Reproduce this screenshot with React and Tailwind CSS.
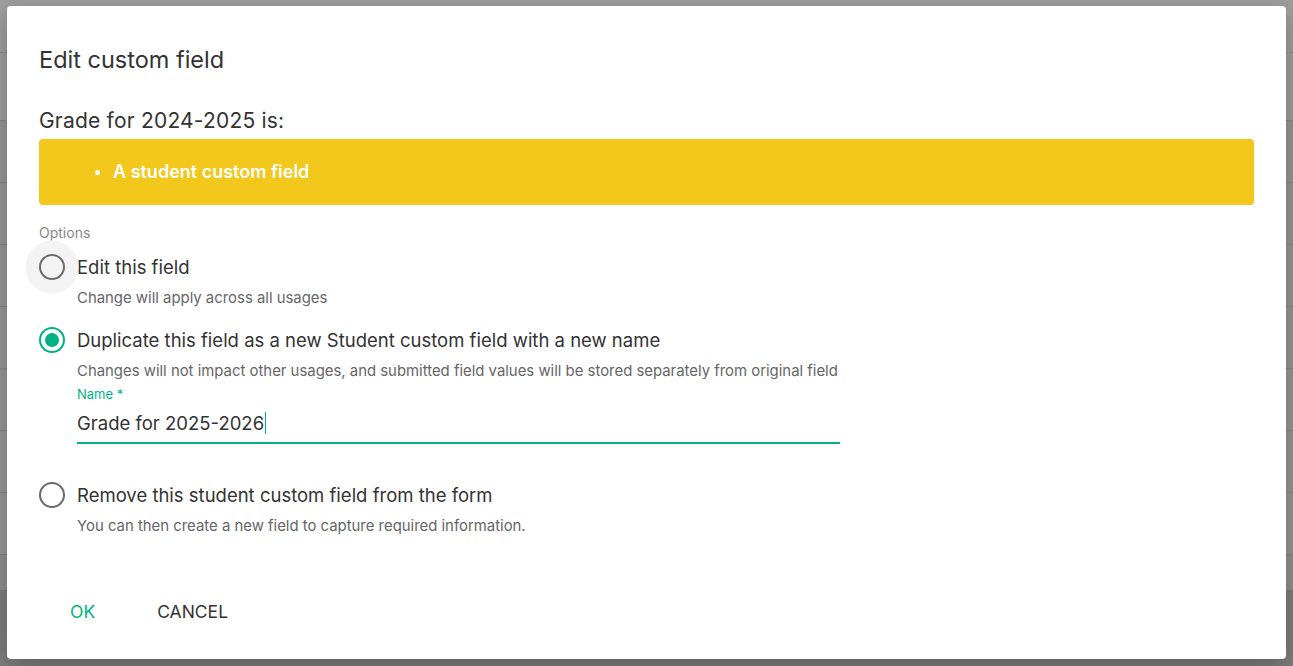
import React from "react";

const GREEN = "text-[#00b386]";

const RadioIcon = ({ checked }) => (
    <span
        className={
            "flex h-[26px] w-[26px] shrink-0 items-center justify-center rounded-full border-2 " +
            (checked ? "border-[#00b386]" : "border-[#6b6b6b]")
        }
    >
        {checked && <span className="h-[14px] w-[14px] rounded-full bg-[#00b386]" />}
    </span>
);

const Option = ({ checked, hover, label, helper, className, children }) => (
    <div className={className}>
        <div className="flex items-center gap-[12px]">
            <div className="relative flex items-center justify-center">
                {hover && (
                    <span className="absolute left-1/2 top-1/2 h-[53px] w-[53px] -translate-x-1/2 -translate-y-1/2 rounded-full bg-[#f3f3f3]" />
                )}
                <span className="relative">
                    <RadioIcon checked={checked} />
                </span>
            </div>
            <span className="text-[18.5px] leading-[24px] text-[#333]">{label}</span>
        </div>
        <div className="ml-[38px] mt-[8px] text-[14.9px] leading-[20px] text-[#666]">{helper}</div>
        {children}
    </div>
);

const BackgroundRows = () => {
    const rows = [186, 248, 310, 372, 434, 496, 558];
    return (
        <div className="h-[666px] w-full bg-[#9e9e9e]">
            <div className="h-[53px] border-b border-dashed border-[#858585]" />
            <div className="h-[68px] border-b border-[#878787]" />
            {rows.map((y) => (
                <div key={y} className="h-[62px] border-b border-[#858585] bg-[#969696]" />
            ))}
            <div className="h-[35px] bg-[#8f8f8f]" />
            <div className="h-[76px] bg-[#7e7e7e]" />
        </div>
    );
};

export default function App() {
    return (
        <div className="relative h-[666px] w-[1293px] overflow-hidden" style={{ fontFamily: "Inter, 'Liberation Sans', sans-serif" }}>
            <BackgroundRows />
            <div className="absolute left-[7px] top-[6px] h-[653px] w-[1279px] rounded-[4px] bg-white shadow-[0_8px_24px_rgba(0,0,0,0.25)]">
                <div className="px-[32px] pt-[38px]">
                    <h2 className="text-[23.5px] leading-[32px] text-[#333]">Edit custom field</h2>

                    <p className="mt-[31px] text-[21px] leading-[28px] tracking-[0.2px] text-[#333]">Grade for 2024-2025 is:</p>

                    <div className="mt-[4px] flex h-[66px] items-center rounded-[4px] bg-[#f2c81d] pl-[56px]">
                        <span className="mr-[13px] h-[5px] w-[5px] rounded-full bg-white" />
                        <span className="text-[18px] font-semibold leading-[24px] text-white">A student custom field</span>
                    </div>

                    <div className="mt-[18px] text-[14px] leading-[20px] text-[#888]">Options</div>

                    <Option
                        className="mt-[11px]"
                        hover
                        label="Edit this field"
                        helper="Change will apply across all usages"
                    />

                    <Option
                        className="mt-[19px]"
                        checked
                        label="Duplicate this field as a new Student custom field with a new name"
                        helper="Changes will not impact other usages, and submitted field values will be stored separately from original field"
                    >
                        <div className="ml-[38px] w-[763px]">
                            <div className={"mt-[4px] text-[13px] leading-[18px] " + GREEN}>Name *</div>
                            <div className="mt-[5px] border-b-[2.5px] border-[#00b386] pb-[7px] text-[18.5px] leading-[24px] text-[#333]">
                                Grade for 2025-2026
                                <span className="ml-[1px] inline-block h-[22px] w-[1px] translate-y-[4px] bg-[#00b386]" />
                            </div>
                        </div>
                    </Option>

                    <Option
                        className="mt-[38px]"
                        label="Remove this student custom field from the form"
                        helper="You can then create a new field to capture required information."
                    />

                    <div className="mt-[64px] flex items-center text-[17.5px] leading-[24px]">
                        <button className={"ml-[31px] " + GREEN}>OK</button>
                        <button className="ml-[62px] text-[#333]">CANCEL</button>
                    </div>
                </div>
            </div>
        </div>
    );
}
